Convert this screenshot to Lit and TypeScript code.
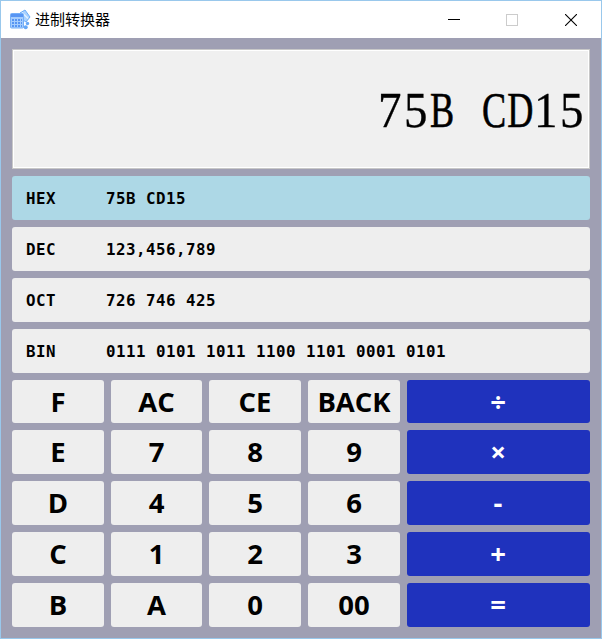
import { LitElement, html, css } from "lit";
import { customElement, property } from "lit/decorators.js";

const ROWS = [
  { base: "HEX", value: "75B CD15" },
  { base: "DEC", value: "123,456,789" },
  { base: "OCT", value: "726 746 425" },
  { base: "BIN", value: "0111 0101 1011 1100 1101 0001 0101" },
];

const KEYS = [
  ["F", "AC", "CE", "BACK", "÷"],
  ["E", "7", "8", "9", "×"],
  ["D", "4", "5", "6", "-"],
  ["C", "1", "2", "3", "+"],
  ["B", "A", "0", "00", "="],
];

@customElement("title-bar")
class TitleBar extends LitElement {
  static styles = css`
    :host { display: flex; height: 37px; background: #fff; align-items: center; }
    .icon { width: 22px; height: 22px; margin-left: 8px; flex: none; }
    .title { margin-left: 4px; margin-top: -1px; font: 15px/20px "Noto Sans CJK SC", sans-serif; color: #000; flex: 1; }
    .btn { width: 58.5px; height: 37px; display: flex; align-items: center; justify-content: center; }
    .controls { display: flex; margin-right: 1px; }
  `;
  render() {
    return html`
      <svg class="icon" viewBox="0 0 22 22">
        <path d="M11 4l5-3 5 7-4 5-3-2V5z" fill="#a9d2ff" stroke="#6bacf8" />
        <path d="M13 3.5l6 6" stroke="#e5f2ff" stroke-width="1.2" />
        <rect x="1.5" y="4.5" width="13" height="14.5" rx="1" fill="#a5cdfd" stroke="#74aff9" />
        <rect x="2" y="5" width="12" height="3" fill="#5795f3" />
        <path d="M3 11h10M3 14h10M3 17h10" stroke="#5795f3" stroke-width="2" stroke-dasharray="2 1" />
        <circle cx="18.5" cy="14.5" r="1.7" fill="#67a8f7" />
        <circle cx="16.7" cy="18.3" r="2" fill="#67a8f7" />
      </svg>
      <div class="title">进制转换器</div>
      <div class="controls">
        <div class="btn"><svg width="12" height="12"><path d="M0 5.5h12" stroke="#000" shape-rendering="crispEdges" /></svg></div>
        <div class="btn"><svg width="12" height="12"><rect x=".5" y=".5" width="11" height="11" fill="none" stroke="#ccc" shape-rendering="crispEdges" /></svg></div>
        <div class="btn"><svg width="12" height="12"><path d="M0 0l12 12M12 0L0 12" stroke="#000" stroke-width="1.1" /></svg></div>
      </div>
    `;
  }
}

@customElement("main-display")
class MainDisplay extends LitElement {
  @property() value = "";
  static styles = css`
    :host {
      display: flex; justify-content: flex-end; align-items: center; box-sizing: border-box;
      height: 120px; padding-right: 4px; padding-top: 1px;
      background: #f0f0f0; border: 1px solid #c8c8c8; box-shadow: inset 0 0 0 1px #fff;
      font: 51px/60px "Liberation Serif", serif; color: #000;
    }
    .cell { width: 26px; display: flex; justify-content: center; white-space: pre; }
    .digit { transform: scaleX(0.92); -webkit-text-stroke: 0.3px #000; }
    .wide { transform: scaleX(0.71); -webkit-text-stroke: 0.6px #000; }
  `;
  render() {
    return [...this.value].map(
      (c) => html`<span class="cell"><span class=${/[A-F]/.test(c) ? "wide" : "digit"}>${c}</span></span>`
    );
  }
}

@customElement("app-root")
class AppRoot extends LitElement {
  static styles = css`
    :host {
      display: flex; flex-direction: column; box-sizing: border-box; width: 602px; height: 639px;
      border: 1px solid #99c8ec; background: #9f9fb3; overflow: hidden;
    }
    .body { padding: 11px; display: flex; flex-direction: column; gap: 7px; }
    .row {
      height: 44px; border-radius: 3px; background: #eee; display: flex; align-items: center;
      box-sizing: border-box; padding-left: 14px; padding-top: 1px;
      font: bold 15.8px/20px "DejaVu Sans Mono", monospace; letter-spacing: 0.49px; color: #000; white-space: pre;
    }
    .row.active { background: #add8e6; }
    .base { width: 80px; }
    .keys {
      display: grid; gap: 7px; grid-template-columns: 92px 91px 92px 92px 183px;
      grid-template-rows: 43px 44px 44px 44px 44px;
    }
    .key {
      border-radius: 3px; background: #eee; color: #000; display: flex; align-items: center;
      box-sizing: border-box;
      justify-content: center; font: bold 27.5px/38px "Open Sans", "Noto Sans", sans-serif;
    }
    .key.op { background: #1f32bd; color: #fff; padding-right: 1px; }
  `;
  render() {
    return html`
      <title-bar></title-bar>
      <div class="body">
        <main-display .value=${"75B CD15"}></main-display>
        ${ROWS.map(
          (r, i) => html`<div class="row ${i === 0 ? "active" : ""}"><span class="base">${r.base}</span><span>${r.value}</span></div>`
        )}
        <div class="keys">
          ${KEYS.map((line) => line.map((k, i) => html`<div class="key ${i === 4 ? "op" : ""}">${k}</div>`))}
        </div>
      </div>
    `;
  }
}
